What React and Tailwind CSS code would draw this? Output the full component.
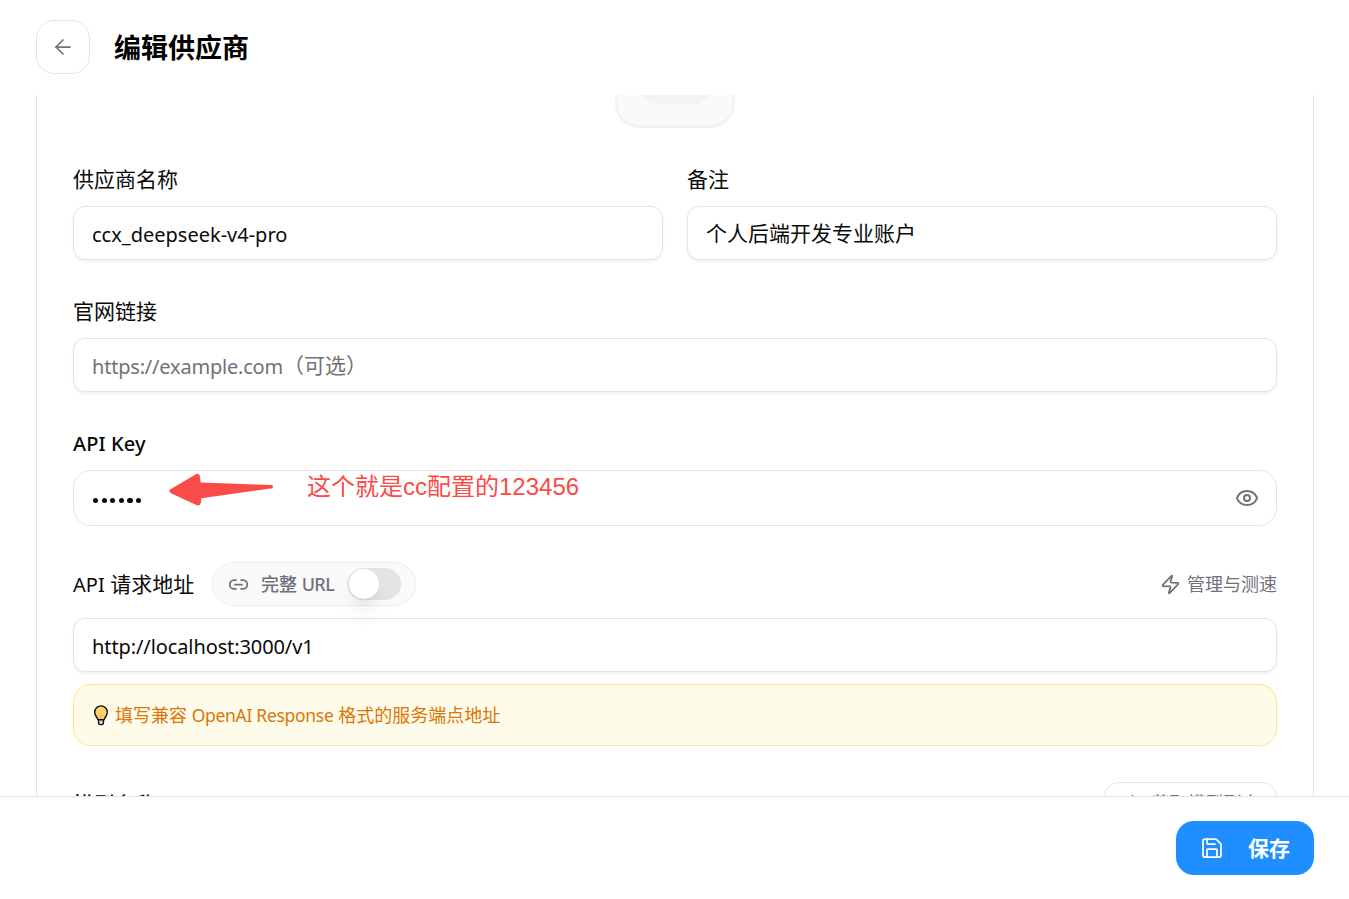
import React from 'react';
import { ArrowLeft, Download, Eye, Link2, Save, Zap } from 'lucide-react';

const inputClass =
  'flex h-[54px] items-center rounded-[12px] border border-[#e4e4e7] bg-white px-[18px] pt-[2px] text-[21px] shadow-[0_1.5px_3px_rgba(0,0,0,0.06)]';

const Field = ({ label, children }) => (
  <div className="flex flex-1 flex-col">
    <div className="mb-[11px] h-[31px] text-[21px] leading-[31px]">{label}</div>
    {children}
  </div>
);

const Bulb = () => (
  <svg className="h-[22px] w-[18px]" viewBox="0 0 18 22" fill="none">
    <path d="M6 15.8C5.4 13.4 2.7 12 2.7 8.2a6.3 6.3 0 0 1 12.6 0c0 3.8-2.7 5.2-3.3 7.6z" fill="#ffd071" stroke="#111" strokeWidth="1.4" />
    <path d="M7 11l2 1.2 2-1.2M9 12.2v3" stroke="#fbb829" strokeWidth="1.2" />
    <path d="M6.6 15.8h4.8v3c0 1-.8 1.8-1.8 1.8H8.4c-1 0-1.8-.8-1.8-1.8z" fill="#d5d8dc" stroke="#111" strokeWidth="1.4" />
  </svg>
);

const Arrow = () => (
  <svg className="absolute left-[94px] top-[1px] h-[34px] w-[106px]" viewBox="0 0 106 34" fill="#f94b47">
    <path d="M2 17.6 27.5 2.4Q31.5.6 32 4.6L32.6 10.6 104.8 13.1V16.2L33.4 26.2 33 30.6Q32 34.6 28.4 33L3 21.2Q.2 19.4 2 17.6Z" />
  </svg>
);

const App = () => {
  return (
    <div className="flex h-[899px] w-full flex-col overflow-hidden bg-white font-['Noto_Sans','Noto_Sans_CJK_SC',sans-serif] text-[#0a0a0a]">
      <header className="flex h-[95px] shrink-0 items-start gap-6 px-9 pt-5">
        <button className="flex h-[54px] w-[54px] items-center justify-center rounded-[18px] border border-[#e4e4e7] text-[#71717a]">
          <ArrowLeft size={24} strokeWidth={1.75} />
        </button>
        <h1 className="text-[27px] font-bold leading-[56px] text-black">编辑供应商</h1>
      </header>

      <main className="min-h-0 flex-1 overflow-hidden px-9">
        <div className="mr-[-1px] h-[900px] border-x border-[#e4e4e7] px-9">
          <div className="flex h-[33px] items-end justify-center overflow-hidden">
            <div className="flex h-[120px] w-[120px] shrink-0 items-center justify-center rounded-[24px] border-[3px] border-[#f3f3f3] bg-[#fafafa]">
              <div className="h-[72px] w-[72px] rounded-[18px] bg-[#f3f3f3]" />
            </div>
          </div>

          <div className="mt-9 flex gap-6">
            <Field label="供应商名称">
              <div className={inputClass}>
                <span className="pt-px text-[20px]">ccx_deepseek-v4-pro</span>
              </div>
            </Field>
            <Field label="备注">
              <div className={inputClass}>个人后端开发专业账户</div>
            </Field>
          </div>

          <div className="mt-9">
            <Field label="官网链接">
              <div className={`${inputClass} text-[#71717a]`}>
                <span className="pt-px text-[20px] tracking-[-0.2px]">https://example.com</span>（可选）
              </div>
            </Field>
          </div>

          <div className="mt-9">
            <Field label={<span className="inline-block text-[20px] font-medium tracking-[0.1px]">API Key</span>}>
              <div className="relative flex h-14 items-center justify-between rounded-[18px] border border-[#e4e4e7] px-[18px]">
                <div className="flex gap-[3.4px] pl-[1px] pt-[5px]">
                  {[1, 2, 3, 4, 5, 6].map((n) => (
                    <span key={n} className="h-[5px] w-[5.2px] rounded-full bg-[#0a0a0a]" />
                  ))}
                </div>
                <Arrow />
                <span className="absolute left-[233px] top-0 whitespace-nowrap font-['Liberation_Sans','Noto_Sans_CJK_SC',sans-serif] text-[24px] leading-8 text-[#f94b47]">
                  这个就是cc配置的123456
                </span>
                <Eye size={24} strokeWidth={2} className="mr-[-1px] text-[#71717a]" />
              </div>
            </Field>
          </div>

          <div className="mt-9 flex h-11 items-center">
            <div className="w-[139px] whitespace-nowrap pt-[2px] text-[21px]">
              <span className="text-[20px]">API</span> 请求地址
            </div>
            <div className="flex h-11 w-[204px] items-center rounded-full border border-[#ececee] bg-[#fafafa] pl-[15px] text-[18px] font-medium text-[#71717a]">
              <Link2 size={21} />
              <span className="ml-3 w-[86px] whitespace-nowrap">
                完整 <span className="tracking-[-0.6px]">URL</span>
              </span>
              <div className="flex h-8 w-[54px] items-center rounded-full bg-[#e4e4e7] pl-[1.5px]">
                <div className="h-[30px] w-[30px] rounded-full bg-white shadow-[0_15px_22px_-4px_rgba(0,0,0,0.1),0_6px_9px_-6px_rgba(0,0,0,0.12)]" />
              </div>
            </div>
            <div className="ml-auto flex items-center gap-[6px] text-[18px] text-[#71717a]">
              <Zap size={21} strokeWidth={2} />
              管理与测速
            </div>
          </div>
          <div className={`${inputClass} mt-3`}>
            <span className="pt-px text-[20px] tracking-[-0.1px]">http://localhost:3000/v1</span>
          </div>
          <div className="mt-3 flex h-[62px] items-center rounded-[18px] border border-[#fde68a] bg-[#fffbeb] px-[18px] text-[18px] text-[#d97706]">
            <Bulb />
            <span className="ml-[5px]">
              填写兼容 <span className="text-[17.5px] tracking-[-0.3px]">OpenAI Response</span> 格式的服务端点地址
            </span>
          </div>

          <div className="mt-9 flex h-[42px] items-center justify-between">
            <span className="pt-[3px] text-[21px] font-medium">模型名称</span>
            <div className="flex h-[42px] w-[173px] items-center justify-center gap-[9px] rounded-[15px] border border-[#e4e4e7] pt-px text-[18px] text-[#71717a]">
              <Download size={21} />
              获取模型列表
            </div>
          </div>
        </div>
      </main>

      <footer className="flex h-[103px] shrink-0 items-start justify-end border-t border-[#e4e4e7] px-[35px] pt-6">
        <button className="flex h-[54px] w-[138px] items-center rounded-[18px] bg-[#1f8fff] pl-6 text-[21px] font-bold text-white">
          <Save size={24} strokeWidth={1.75} />
          <span className="ml-6 pt-[2px]">保存</span>
        </button>
      </footer>
    </div>
  );
};

export default App;
